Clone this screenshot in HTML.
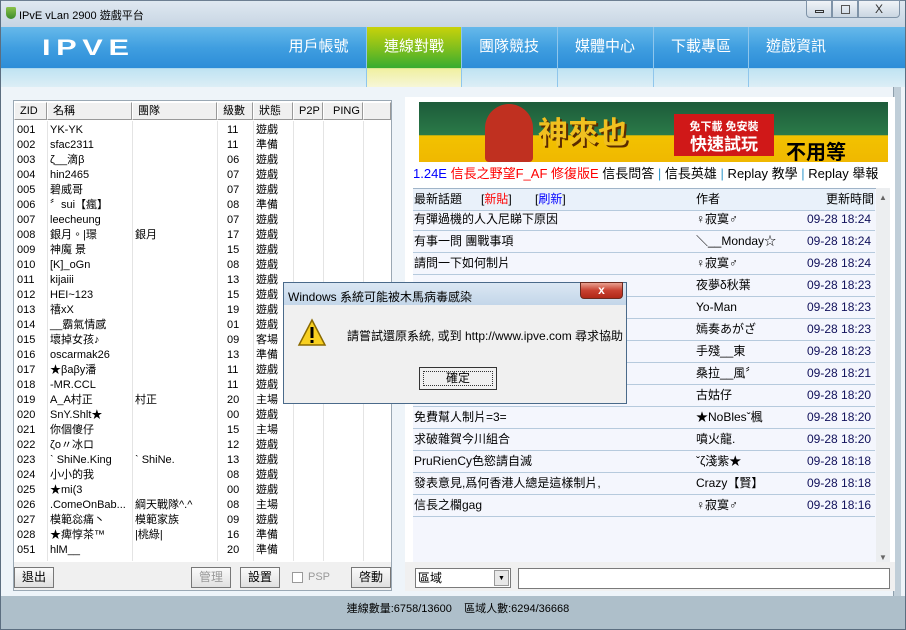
<!DOCTYPE html>
<html><head><meta charset="utf-8"><style>
*{margin:0;padding:0;box-sizing:border-box}
body{width:906px;height:630px;overflow:hidden;font-family:"Liberation Sans","Noto Sans CJK TC",sans-serif;font-size:12px;position:relative;background:#aebfca}
.abs{position:absolute}
#title{left:0;top:0;width:906px;height:27px;background:linear-gradient(#dfe8f1,#c7d5e3);border:1px solid #6d7f92;border-bottom:none}
#hdr{left:1px;top:27px;width:904px;height:60px;background:linear-gradient(#66b9ea 0,#3f9ee0 35%,#2d8dd8 68%,#bfe3f2 69%,#dceef6 100%)}
.nav{top:27px;height:60px;width:95px;color:#fff;font-size:15px;text-align:center;line-height:40px;border-left:1px solid #8fc6ec}
#main{left:1px;top:87px;width:904px;height:509px;background:#eef4f9}
#left{left:13px;top:100px;width:379px;height:491px;background:#fff;border:1px solid #9aa8b4}
.lr{position:absolute;left:14px;width:376px;height:15px;font-size:11px;line-height:15px;white-space:nowrap}
.lr span{position:absolute;top:0;height:15px;overflow:hidden;padding-left:3px}
.vl{position:absolute;top:121px;width:1px;height:440px;background:#e4e4e4}
.th{top:102px;left:14px;height:18px;background:#f0f0f0}
.th div{position:absolute;top:0;height:18px;border:1px solid #999;border-left-color:#fff;border-top-color:#fff;font-size:11px;line-height:16px;padding-left:5px}
.btn{height:21px;background:linear-gradient(#fafafa,#e0e0e0);border:1px solid #777;font-size:12px;text-align:center;line-height:19px}
#right{left:405px;top:97px;width:490px;height:494px;background:#fff}
.row{left:413px;width:462px;height:22px;border-bottom:1px solid #b6cadd;font-size:12px;line-height:21px;white-space:nowrap}
.row span{position:absolute}
</style></head><body>
<div id="title" class="abs"></div>
<div class="abs" style="left:6px;top:7px;width:10px;height:12px;background:linear-gradient(#8ac24a,#3a8a2a);border-radius:2px 2px 6px 6px"></div>
<div class="abs" style="left:19px;top:7px;font-size:11px;color:#000">IPvE vLan 2900 遊戲平台</div>
<div class="abs" style="left:806px;top:0;width:26px;height:18px;border:1px solid #7f93a8;border-radius:0 0 0 4px;background:linear-gradient(#f0f4f8,#cad6e2)"><div class="abs" style="left:8px;top:9px;width:9px;height:3px;border:1px solid #333"></div></div>
<div class="abs" style="left:832px;top:0;width:26px;height:18px;border:1px solid #7f93a8;background:linear-gradient(#f0f4f8,#cad6e2)"><div class="abs" style="left:8px;top:4px;width:9px;height:9px;border:1px solid #555"></div></div>
<div class="abs" style="left:858px;top:0;width:42px;height:18px;border:1px solid #7f93a8;border-radius:0 0 4px 0;background:linear-gradient(#f0f4f8,#cad6e2);text-align:center;font-size:12px;line-height:16px;color:#333">X</div>
<div id="hdr" class="abs"></div>
<div class="abs" style="left:42px;top:35px;color:#fff;font-size:22px;font-weight:bold;letter-spacing:4px;font-family:'Liberation Sans',sans-serif;transform:scaleX(1.4);transform-origin:left">IPVE</div>
<div class="abs nav" style="left:271px;border-left:none">用戶帳號</div>
<div class="abs nav" style="left:366px;background:linear-gradient(#c8d20a 0,#8cc21a 30%,#38ac30 68%,#f0f0a0 69%,#f6f6d8 100%)">連線對戰</div>
<div class="abs nav" style="left:461px">團隊競技</div>
<div class="abs nav" style="left:557px">媒體中心</div>
<div class="abs nav" style="left:653px">下載專區</div>
<div class="abs nav" style="left:748px">遊戲資訊</div>
<div id="main" class="abs"></div>
<div class="abs" style="left:893px;top:87px;width:8px;height:509px;background:#c0ced8;border-left:1px solid #8fa0ad"></div>
<div id="left" class="abs"></div>
<div class="abs th" style="width:376px">
<div style="left:0;width:33px">ZID</div><div style="left:33px;width:85px">名稱</div><div style="left:118px;width:85px">團隊</div><div style="left:203px;width:36px">級數</div><div style="left:239px;width:40px">狀態</div><div style="left:279px;width:30px">P2P</div><div style="left:309px;width:40px;padding-left:9px">PING</div><div style="left:349px;width:28px"></div></div>
<div class="vl" style="left:47px"></div><div class="vl" style="left:132px"></div><div class="vl" style="left:217px"></div><div class="vl" style="left:253px"></div><div class="vl" style="left:293px"></div><div class="vl" style="left:323px"></div><div class="vl" style="left:363px"></div>
<div id="lrows"></div>
<div class="abs" style="left:13px;top:562px;width:379px;height:29px;background:#f0f0f0;border:1px solid #9aa8b4;border-top:none"></div>
<div class="abs btn" style="left:14px;top:567px;width:40px">退出</div>
<div class="abs btn" style="left:191px;top:567px;width:40px;color:#999">管理</div>
<div class="abs btn" style="left:240px;top:567px;width:40px">設置</div>
<div class="abs" style="left:292px;top:572px;width:11px;height:11px;border:1px solid #999;background:#fff"></div>
<div class="abs" style="left:308px;top:571px;color:#999;font-size:11px">PSP</div>
<div class="abs btn" style="left:351px;top:567px;width:40px">啓動</div>

<div id="right" class="abs"></div>
<div class="abs" style="left:419px;top:102px;width:469px;height:60px;background:linear-gradient(#1d5b3a 0,#2a7a48 55%,#f2c200 56%,#f0b800 100%)"></div>
<div class="abs" style="left:485px;top:104px;width:48px;height:58px;background:#c03020;border-radius:24px 24px 4px 4px"></div>
<div class="abs" style="left:538px;top:108px;font-size:30px;font-weight:bold;color:#f0c020;text-shadow:2px 2px 0 #5a2a00">神來也</div>
<div class="abs" style="left:674px;top:114px;width:100px;height:42px;background:#d01818;color:#fff;font-weight:bold;font-size:17px;text-align:center;line-height:18px;padding-top:2px"><span style="font-size:11px">免下載 免安裝</span><br>快速試玩</div>
<div class="abs" style="left:786px;top:136px;font-size:20px;font-weight:bold;color:#000">不用等</div>
<div class="abs" style="left:413px;top:163px;font-size:13px;white-space:nowrap"><span style="color:#00f">1.24E</span> <span style="color:#f00">信長之野望F_AF 修復版E</span> 信長問答 <span style="color:#39c">|</span> 信長英雄 <span style="color:#39c">|</span> Replay 教學 <span style="color:#39c">|</span> Replay 舉報</div>
<div class="abs" style="left:413px;top:188px;width:463px;height:377px;background:#f4f6fd;border-top:1px solid #a0b4c8"></div>
<div class="abs" style="left:876px;top:188px;width:14px;height:377px;background:#eceef0"></div>
<div class="abs" style="left:879px;top:193px;font-size:8px;color:#666">▲</div>
<div class="abs" style="left:879px;top:553px;font-size:8px;color:#666">▼</div>
<div class="abs row" style="top:189px;background:#e9f1fa"><span style="left:1px">最新話題</span><span style="left:68px">[<b style="color:#f00;font-weight:normal">新貼</b>]</span><span style="left:122px">[<b style="color:#00f;font-weight:normal">刷新</b>]</span><span style="left:283px">作者</span><span style="left:413px">更新時間</span></div>
<div id="rows"></div>
<div class="abs" style="left:405px;top:562px;width:490px;height:29px;background:#f0f0f0"></div>
<div class="abs" style="left:415px;top:568px;width:96px;height:20px;background:#fff;border:1px solid #7a7a7a;font-size:12px;line-height:18px;padding-left:2px">區域</div>
<div class="abs" style="left:494px;top:570px;width:15px;height:16px;background:#e8e8e8;border:1px solid #999;font-size:7px;text-align:center;line-height:15px">▼</div>
<div class="abs" style="left:518px;top:568px;width:372px;height:21px;background:#fff;border:1px solid #7a7a7a"></div>
<div class="abs" style="left:0;top:596px;width:906px;text-align:center;font-size:11px;line-height:26px;padding-left:10px">連線數量:6758/13600&nbsp;&nbsp;&nbsp;&nbsp;區域人數:6294/36668</div>
<div class="abs" style="left:0;top:0;width:906px;height:630px;border:1px solid #5c6e80;border-top:none;pointer-events:none"></div>

<div class="abs" style="left:283px;top:282px;width:344px;height:122px;border:1px solid #4a6a8a;background:linear-gradient(#dbe7f3,#c3d6e9 22px,#f0f0f0 22px)"></div>
<div class="abs" style="left:288px;top:288px;font-size:12px">Windows 系統可能被木馬病毒感染</div>
<div class="abs" style="left:580px;top:282px;width:43px;height:17px;background:linear-gradient(#e8a090,#c84030 50%,#b02818);border:1px solid #6a2a20;border-radius:0 0 4px 4px;color:#fff;font-weight:bold;text-align:center;line-height:15px">x</div>
<svg class="abs" style="left:297px;top:318px" width="30" height="30"><polygon points="15,2 28,27 2,27" fill="#f8d020" stroke="#8a6a00" stroke-width="1.5"/><rect x="13.5" y="9" width="3" height="11" fill="#000"/><rect x="13.5" y="22" width="3" height="3" fill="#000"/></svg>
<div class="abs" style="left:347px;top:327px;font-size:12px">請嘗試還原系統, 或到 http://www.ipve.com 尋求協助</div>
<div class="abs" style="left:419px;top:367px;width:78px;height:23px;border:1px solid #333;background:#f0f0f0"><div style="margin:3px;height:15px;border:1px dotted #333;text-align:center;line-height:13px">確定</div></div>
<script>
var L=[["001","YK-YK","","11","遊戲"],["002","sfac2311","","11","準備"],["003","ζ__滴β","","06","遊戲"],["004","hin2465","","07","遊戲"],["005","碧威哥","","07","遊戲"],["006","〞sui【瘋】","","08","準備"],["007","leecheung","","07","遊戲"],["008","銀月。|璟","銀月","17","遊戲"],["009","神魔 景","","15","遊戲"],["010","[K]_oGn","","08","遊戲"],["011","kijaiii","","13","遊戲"],["012","HEI~123","","15","遊戲"],["013","禧xX","","19","遊戲"],["014","__霸氣情感","","01","遊戲"],["015","壞掉女孩♪","","09","客場"],["016","oscarmak26","","13","準備"],["017","★βaβy潘","","11","遊戲"],["018","-MR.CCL","","11","遊戲"],["019","A_A村正","村正","20","主場"],["020","SnY.Shlt★","","00","遊戲"],["021","你個傻仔","","15","主場"],["022","ζo〃冰ロ","","12","遊戲"],["023","ˋ ShiNe.King","ˋ ShiNe.","13","遊戲"],["024","小小的我","","08","遊戲"],["025","★mi(3","","00","遊戲"],["026",".ComeOnBab...","綱天戰隊^.^","08","主場"],["027","模範惢痛丶","模範家族","09","遊戲"],["028","★痺惇茶™","|桃綠|","16","準備"],["051","hlM__","","20","準備"]];
var X=[[0,33],[33,85],[118,85],[210,29],[239,40]];
var s="";L.forEach(function(r,i){s+='<div class="lr" style="top:'+(123+i*15)+'px">';r.forEach(function(c,j){s+='<span style="left:'+X[j][0]+'px;width:'+X[j][1]+'px">'+c+'</span>';});s+='</div>';});
document.getElementById("lrows").outerHTML=s;
var d=[["有彈過機的人入尼睇下原因","♀寂寞♂","18:24"],["有事一問 團戰事項","＼__Monday☆","18:24"],["請問一下如何制片","♀寂寞♂","18:24"],["","夜夢δ秋葉","18:23"],["","Yo-Man","18:23"],["","嫣奏あがざ","18:23"],["","手殘__東","18:23"],["","桑拉__風〞","18:21"],["","古姑仔","18:20"],["免費幫人制片=3=","★NoBlesˇ楓","18:20"],["求破雜賀今川組合","噴火龍.","18:20"],["PruRienCy色慾請自滅","ˇζ淺紫★","18:18"],["發表意見,爲何香港人總是這樣制片,","Crazy【賢】","18:18"],["信長之欄gag","♀寂寞♂","18:16"]];
var h="";d.forEach(function(r,i){h+='<div class="abs row" style="top:'+(209+i*22)+'px"><span style="left:1px">'+r[0]+'</span><span style="left:283px">'+r[1]+'</span><span style="left:394px;color:#10105a">09-28 '+r[2]+'</span></div>';});
document.getElementById("rows").outerHTML=h;
</script>
</body></html>
